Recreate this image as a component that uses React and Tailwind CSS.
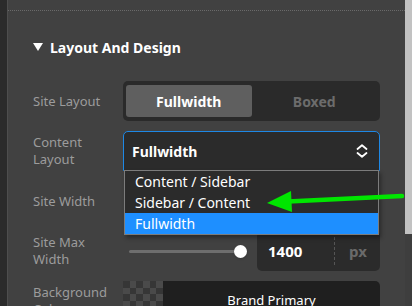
import React from "react";

const FONT = { fontFamily: '"Noto Sans", "Open Sans", sans-serif' };

function Label({ children }) {
  return (
    <div className="w-[90px] shrink-0 pr-[14px] text-[13px] leading-[17px] text-[#9c9c9c]">
      {children}
    </div>
  );
}

function Segmented() {
  return (
    <div className="flex-1 h-[40px] rounded-[5px] bg-[#2a2a2a] flex p-[3px] py-[4px]">
      <div className="flex-1 rounded-[3px] bg-[#5f5f5f] flex items-center justify-center text-[14px] font-bold text-white">
        Fullwidth
      </div>
      <div className="flex-1 flex items-center justify-center text-[14px] font-bold text-[#6c6c6c]">
        Boxed
      </div>
    </div>
  );
}

function SelectBox() {
  const options = ["Content / Sidebar", "Sidebar / Content", "Fullwidth"];
  return (
    <div className="relative flex-1 h-[40px]">
      <div className="h-[40px] rounded-t-[5px] border border-[#1e88e5] bg-[#2b2b2b] flex items-center justify-between pl-[8px] pr-[11px]">
        <span className="text-[14px] font-bold text-white">Fullwidth</span>
        <svg width="12" height="14" viewBox="0 0 12 14" fill="none" stroke="white" strokeWidth="1.8" strokeLinecap="round" strokeLinejoin="round">
          <path d="M1.5 5 6 1.2 10.5 5" />
          <path d="M1.5 9 6 12.8 10.5 9" />
        </svg>
      </div>
      <div className="absolute z-20 left-[1px] right-[1px] top-[39px] border border-[#7c7c7c] bg-[#2b2b2b] shadow-[2px_3px_4px_rgba(0,0,0,0.35)]">
        {options.map((o) => (
          <div
            key={o}
            className={
              o === "Fullwidth"
                ? "h-[21px] pl-[10px] flex items-center text-[14px] text-white bg-[#1e8fff]"
                : "h-[21px] pl-[10px] flex items-center text-[14px] text-white"
            }
          >
            {o}
          </div>
        ))}
      </div>
    </div>
  );
}

function MaxWidth() {
  return (
    <div className="flex-1 flex items-center gap-[6px]">
      <div className="flex-1 h-[40px] flex items-center pl-[6px] pr-[4px]">
        <div className="flex-1 h-[3px] bg-[#6e6e6e] rounded-full" />
        <div className="w-[13px] h-[13px] rounded-full bg-white -ml-[6px] shadow" />
      </div>
      <div className="w-[123px] h-[40px] rounded-[5px] bg-[#2b2b2b] flex items-center">
        <span className="w-[77px] pl-[11px] text-[15px] font-bold text-white">1400</span>
        <div className="h-[28px] border-l border-dashed border-[#555]" />
        <span className="flex-1 pl-[14px] text-[15px] font-bold text-[#6a6a6a]">px</span>
      </div>
    </div>
  );
}

function Swatch() {
  const cells = [];
  for (let r = 0; r < 6; r++) {
    for (let c = 0; c < 6; c++) {
      cells.push(
        <div
          key={r + "-" + c}
          className={(r + c) % 2 === 0 ? "bg-[#363636]" : "bg-[#4a4a4a]"}
        />
      );
    }
  }
  return (
    <div className="flex-1 h-[40px] flex">
      <div className="w-[40px] grid grid-cols-6 grid-rows-6">{cells}</div>
      <div className="flex-1 rounded-r-[5px] bg-[#1f1f1f] flex items-center justify-center text-[13px] text-white">
        Brand Primary
      </div>
    </div>
  );
}

export default function App() {
  return (
    <div style={FONT} className="relative w-[412px] h-[306px] overflow-hidden flex bg-[#414141]">
      <div className="w-[8px] shrink-0 bg-[#2b2b2b] border-r border-[#4e4e4e]" />

      <div className="flex-1 flex flex-col">
        <div className="h-[11px] shrink-0 border-b border-dotted border-[#6a6a6a]" />
        <div className="px-[25px]">
          <div className="mt-[25px] h-[22px] flex items-center gap-[7px]">
            <svg width="10" height="8" viewBox="0 0 10 8">
              <polygon points="0,0 10,0 5,8" fill="white" />
            </svg>
            <span className="text-[14px] font-bold text-white">Layout And Design</span>
          </div>

          <div className="mt-[23px] flex flex-col gap-[10px]">
            <div className="flex items-center h-[40px]">
              <Label>Site Layout</Label>
              <Segmented />
            </div>
            <div className="flex items-center h-[40px] relative z-10">
              <Label>Content Layout</Label>
              <SelectBox />
            </div>
            <div className="flex items-center h-[40px]">
              <Label>Site Width</Label>
              <div className="flex-1" />
            </div>
            <div className="flex items-center h-[40px]">
              <Label>Site Max Width</Label>
              <MaxWidth />
            </div>
            <div className="flex items-center h-[40px]">
              <Label>Background Color</Label>
              <Swatch />
            </div>
          </div>
        </div>
      </div>

      <div className="w-[7px] shrink-0 flex flex-col bg-[#3e3e3e]">
        <div className="h-[234px] bg-[#c2c2c2]" />
      </div>

      <svg className="absolute inset-0 z-30 pointer-events-none" width="412" height="306">
        <line x1="402" y1="196" x2="288" y2="201.5" stroke="#00e600" strokeWidth="4.5" strokeLinecap="round" />
        <polygon points="267,203 291,191 292,212" fill="#00e600" />
      </svg>
    </div>
  );
}
